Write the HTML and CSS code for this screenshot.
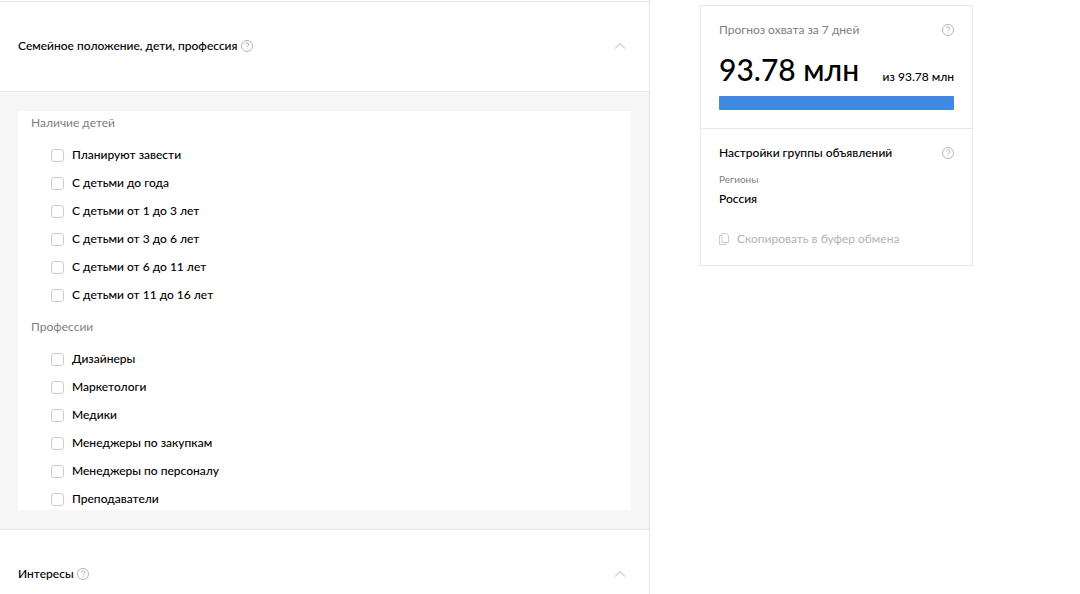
FILE: index.html
```
<!DOCTYPE html>
<html lang="ru">
<head>
    <meta charset="UTF-8">
    <meta name="viewport" content="width=device-width, initial-scale=1.0">
    <title>Профиль пользователей</title>
    <link rel="stylesheet" href="styles.css">
</head>
<body>
    <svg width="0" height="0" class="sprite">
        <symbol id="icon-help" viewBox="0 0 12 12">
            <circle cx="6" cy="6" r="5.5"/>
            <path d="M4.2 4.6a1.8 1.7 0 1 1 2.6 1.5c-.6.4-.8.6-.8 1.2M6 8.4v1"/>
        </symbol>
        <symbol id="icon-up" viewBox="0 0 12 8">
            <path d="M1 6.5l5-5 5 5"/>
        </symbol>
    </svg>

    <div class="page">
        <main class="settings">
            <section>
                <div class="section-header">
                    <h2>Семейное положение, дети, профессия</h2>
                    <button type="button" class="icon-button" aria-label="Справка"><svg class="help"><use href="#icon-help"/></svg></button>
                    <button type="button" class="icon-button toggle" aria-label="Свернуть"><svg class="arrow"><use href="#icon-up"/></svg></button>
                </div>
                <div class="section-body">
                    <div class="options">
                        <h3>Наличие детей</h3>
                        <label class="option"><input type="checkbox">Планируют завести</label>
                        <label class="option"><input type="checkbox">С детьми до года</label>
                        <label class="option"><input type="checkbox">С детьми от 1 до 3 лет</label>
                        <label class="option"><input type="checkbox">С детьми от 3 до 6 лет</label>
                        <label class="option"><input type="checkbox">С детьми от 6 до 11 лет</label>
                        <label class="option"><input type="checkbox">С детьми от 11 до 16 лет</label>
                        <h3>Профессии</h3>
                        <label class="option"><input type="checkbox">Дизайнеры</label>
                        <label class="option"><input type="checkbox">Маркетологи</label>
                        <label class="option"><input type="checkbox">Медики</label>
                        <label class="option"><input type="checkbox">Менеджеры по закупкам</label>
                        <label class="option"><input type="checkbox">Менеджеры по персоналу</label>
                        <label class="option"><input type="checkbox">Преподаватели</label>
                    </div>
                </div>
            </section>
            <section>
                <div class="section-header">
                    <h2>Интересы</h2>
                    <button type="button" class="icon-button" aria-label="Справка"><svg class="help"><use href="#icon-help"/></svg></button>
                    <button type="button" class="icon-button toggle" aria-label="Свернуть"><svg class="arrow"><use href="#icon-up"/></svg></button>
                </div>
            </section>
        </main>

        <aside class="forecast">
            <div class="card-part">
                <div class="card-row">
                    <span class="muted">Прогноз охвата за 7 дней</span>
                    <button type="button" class="icon-button" aria-label="Справка"><svg class="help"><use href="#icon-help"/></svg></button>
                </div>
                <div class="reach">
                    <span class="reach-value">93.78 млн</span>
                    <span>из 93.78 млн</span>
                </div>
                <div class="reach-bar"></div>
            </div>
            <div class="card-part">
                <div class="card-row">
                    <h2>Настройки группы объявлений</h2>
                    <button type="button" class="icon-button" aria-label="Справка"><svg class="help"><use href="#icon-help"/></svg></button>
                </div>
                <div class="region-label">Регионы</div>
                <div>Россия</div>
                <button type="button" class="copy" disabled>
                    <svg viewBox="0 0 10 12"><path d="M3 .5h4.5l2 2v7H3zM3 2.5H.5v9H7v-2"/></svg>
                    Скопировать в буфер обмена
                </button>
            </div>
        </aside>
    </div>
</body>
</html>
```
FILE: styles.css
```
* {
    box-sizing: border-box;
}
body {
    margin: 0;
    background-color: #fff;
    color: #000;
    font-family: Lato, "Noto Sans", sans-serif;
    font-size: 12px;
    font-weight: 500;
    line-height: 16px;
}
h2,
h3 {
    margin: 0;
    font-size: 12px;
    font-weight: 500;
}
button {
    font: inherit;
    border: none;
    background: none;
    padding: 0;
}
svg {
    display: block;
    fill: none;
    stroke: #b5b5b5;
}
.sprite {
    position: absolute;
}
.page {
    display: grid;
    grid-template-columns: minmax(0, 1fr) 273px;
    gap: 50px;
    padding-right: 107px;
}

/* Left column */
.settings {
    padding-top: 1px;
    border-right: 1px solid #e5e5e5;
}
.section-header {
    display: flex;
    align-items: center;
    gap: 3px;
    height: 90px;
    padding: 0 23px 2px 18px;
    border-top: 1px solid #e5e5e5;
}
.icon-button {
    cursor: pointer;
}
.toggle {
    margin-left: auto;
}
.help {
    width: 12px;
    height: 12px;
}
.arrow {
    width: 12px;
    height: 8px;
}
.section-body {
    padding: 19px 18px;
    background-color: #f6f6f6;
    border-top: 1px solid #ebebeb;
}
.options {
    display: flex;
    flex-direction: column;
    gap: 12px;
    padding: 0 13px 3px;
    background-color: #fff;
}
.options h3 {
    color: #808080;
    font-weight: 400;
    line-height: 24px;
}
.option {
    display: flex;
    align-items: center;
    gap: 8px;
    padding-left: 20px;
}
.option input {
    appearance: none;
    width: 13px;
    height: 13px;
    margin: 0;
    border: 1px solid #ccc;
    border-radius: 3px;
    background-color: #fff;
}
.option input:checked {
    background-color: #4088e2;
}

/* Forecast card */
.forecast {
    align-self: start;
    margin-top: 5px;
    border: 1px solid #e8e8e8;
}
.card-part {
    padding: 16px 18px 18px;
}
.card-part + .card-part {
    border-top: 1px solid #e8e8e8;
}
.card-row {
    display: flex;
    align-items: center;
    justify-content: space-between;
}
.muted {
    color: #808080;
    font-weight: 400;
}
.reach {
    display: flex;
    align-items: baseline;
    justify-content: space-between;
    margin: 10px 0 6px;
}
.reach-value {
    font-size: 30px;
    line-height: 42px;
}
.reach-bar {
    height: 14px;
    border-radius: 1px;
    background-color: #4088e2;
}
.region-label {
    margin: 10px 0 4px;
    color: #808080;
    font-size: 10px;
    font-weight: 400;
}
.copy {
    display: flex;
    align-items: center;
    gap: 8px;
    margin-top: 24px;
    color: #b3b3b3;
    font-weight: 400;
}
.copy svg {
    width: 10px;
    height: 12px;
    stroke: #ccc;
}
```
